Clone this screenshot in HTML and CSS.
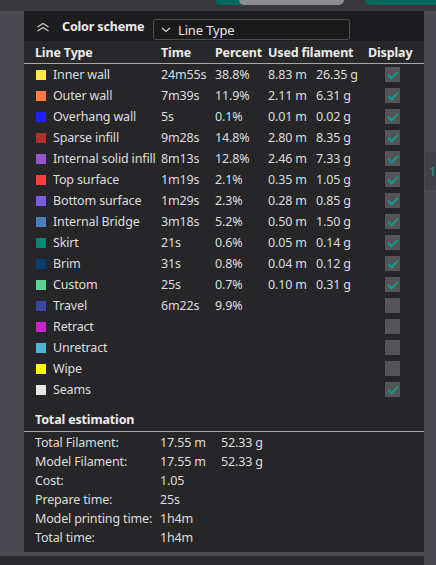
FILE: index.html
```html
<!DOCTYPE html>
<html>
<head>
<meta charset="utf-8">
<link rel="stylesheet" href="styles.css">
</head>
<body>
<div class="topbar">
  <div class="tb-green1"></div>
  <div class="tb-grey"></div>
  <div class="tb-green2"></div>
</div>
<div class="main">
  <div class="gutter-left"></div>
  <div class="panel">
    <div class="scheme">
      <svg class="chev2" width="14" height="10" viewBox="0 0 14 10"><path d="M1.5 5 L7 1.5 L12.5 5 M1.5 9 L7 5.5 L12.5 9" fill="none" stroke="#d0d0d0" stroke-width="1.1"/></svg>
      <span class="scheme-title">Color scheme</span>
      <div class="select">
        <svg class="chev" width="10" height="6" viewBox="0 0 10 6"><path d="M1 1 L5 4.5 L9 1" fill="none" stroke="#d8d8d8" stroke-width="1.2"/></svg>
        <span>Line Type</span>
      </div>
    </div>
    <div class="thead">
      <span>Line Type</span><span>Time</span><span>Percent</span><span class="span2">Used filament</span><span class="disp">Display</span>
    </div>
    <div class="rows">
      <div class="row"><span class="lt"><i class="sw" style="background:#ffe64d"></i>Inner wall</span><span>24m55s</span><span>38.8%</span><span>8.83 m</span><span>26.35 g</span><span class="cbc"><b class="cb on"></b></span></div>
      <div class="row"><span class="lt"><i class="sw" style="background:#ff7d38"></i>Outer wall</span><span>7m39s</span><span>11.9%</span><span>2.11 m</span><span>6.31 g</span><span class="cbc"><b class="cb on"></b></span></div>
      <div class="row"><span class="lt"><i class="sw" style="background:#1f1fff"></i>Overhang wall</span><span>5s</span><span>0.1%</span><span>0.01 m</span><span>0.02 g</span><span class="cbc"><b class="cb on"></b></span></div>
      <div class="row"><span class="lt"><i class="sw" style="background:#b03029"></i>Sparse infill</span><span>9m28s</span><span>14.8%</span><span>2.80 m</span><span>8.35 g</span><span class="cbc"><b class="cb on"></b></span></div>
      <div class="row"><span class="lt"><i class="sw" style="background:#9654cc"></i>Internal solid infill</span><span>8m13s</span><span>12.8%</span><span>2.46 m</span><span>7.33 g</span><span class="cbc"><b class="cb on"></b></span></div>
      <div class="row"><span class="lt"><i class="sw" style="background:#f04040"></i>Top surface</span><span>1m19s</span><span>2.1%</span><span>0.35 m</span><span>1.05 g</span><span class="cbc"><b class="cb on"></b></span></div>
      <div class="row"><span class="lt"><i class="sw" style="background:#7a5ce0"></i>Bottom surface</span><span>1m29s</span><span>2.3%</span><span>0.28 m</span><span>0.85 g</span><span class="cbc"><b class="cb on"></b></span></div>
      <div class="row"><span class="lt"><i class="sw" style="background:#4d80ba"></i>Internal Bridge</span><span>3m18s</span><span>5.2%</span><span>0.50 m</span><span>1.50 g</span><span class="cbc"><b class="cb on"></b></span></div>
      <div class="row"><span class="lt"><i class="sw" style="background:#00876e"></i>Skirt</span><span>21s</span><span>0.6%</span><span>0.05 m</span><span>0.14 g</span><span class="cbc"><b class="cb on"></b></span></div>
      <div class="row"><span class="lt"><i class="sw" style="background:#003f70"></i>Brim</span><span>31s</span><span>0.8%</span><span>0.04 m</span><span>0.12 g</span><span class="cbc"><b class="cb on"></b></span></div>
      <div class="row"><span class="lt"><i class="sw" style="background:#5ed194"></i>Custom</span><span>25s</span><span>0.7%</span><span>0.10 m</span><span>0.31 g</span><span class="cbc"><b class="cb on"></b></span></div>
      <div class="row"><span class="lt"><i class="sw" style="background:#3848a0"></i>Travel</span><span>6m22s</span><span>9.9%</span><span></span><span></span><span class="cbc"><b class="cb"></b></span></div>
      <div class="row"><span class="lt"><i class="sw" style="background:#cc22cc"></i>Retract</span><span></span><span></span><span></span><span></span><span class="cbc"><b class="cb"></b></span></div>
      <div class="row"><span class="lt"><i class="sw" style="background:#4bb6d4"></i>Unretract</span><span></span><span></span><span></span><span></span><span class="cbc"><b class="cb"></b></span></div>
      <div class="row"><span class="lt"><i class="sw" style="background:#ffff00"></i>Wipe</span><span></span><span></span><span></span><span></span><span class="cbc"><b class="cb"></b></span></div>
      <div class="row"><span class="lt"><i class="sw" style="background:#e6e6e6"></i>Seams</span><span></span><span></span><span></span><span></span><span class="cbc"><b class="cb on"></b></span></div>
    </div>
    <div class="total-title">Total estimation</div>
    <div class="totals">
      <div class="trow"><span>Total Filament:</span><span>17.55 m</span><span>52.33 g</span></div>
      <div class="trow"><span>Model Filament:</span><span>17.55 m</span><span>52.33 g</span></div>
      <div class="trow"><span>Cost:</span><span>1.05</span><span></span></div>
      <div class="trow"><span>Prepare time:</span><span>25s</span><span></span></div>
      <div class="trow"><span>Model printing time:</span><span>1h4m</span><span></span></div>
      <div class="trow"><span>Total time:</span><span>1h4m</span><span></span></div>
    </div>
  </div>
  <div class="gutter-right">
    <div class="side-tab">1</div>
  </div>
</div>
<div class="bottombar"></div>
</body>
</html>
```

FILE: styles.css
```css
* { box-sizing: border-box; }
html, body { margin: 0; padding: 0; }
body {
  width: 436px;
  height: 565px;
  overflow: hidden;
  background: #4a4950;
  font-family: "Noto Sans", "Open Sans", sans-serif;
  font-size: 12.5px;
  letter-spacing: -0.15px;
  color: #dedede;
}
.topbar {
  height: 11px;
  background: #38373c;
  display: flex;
  align-items: flex-start;
}
.tb-green1 {
  margin-left: 215px;
  width: 26px;
  height: 5px;
  background: #00675b;
  border-radius: 0 0 0 6px;
}
.tb-grey {
  width: 105px;
  height: 5px;
  background: #8c8c8e;
  border-radius: 0 0 6px 6px;
  margin-left: -2px;
}
.tb-green2 {
  margin-left: 21px;
  flex: 1;
  height: 5px;
  background: #00675b;
  border-radius: 0 0 0 6px;
}
.main {
  display: flex;
  height: 541px;
}
.gutter-left { width: 24px; flex: none; }
.panel {
  width: 400px;
  flex: none;
  background: #262628;
  display: flex;
  flex-direction: column;
}
.gutter-right {
  flex: 1;
  display: flex;
  flex-direction: column;
  padding-top: 141px;
}
.side-tab {
  margin-left: 1px;
  height: 38px;
  background: #414046;
  color: #1aa091;
  font-size: 13px;
  line-height: 38px;
  padding-left: 4px;
  overflow: hidden;
}
.scheme {
  height: 30px;
  background: #1d1d1f;
  display: flex;
  align-items: center;
  padding-left: 12px;
}
.chev2 { flex: none; margin-top: 1px; }
.scheme-title {
  font-weight: 700;
  margin-left: 12px;
  width: 83px;
  flex: none;
  white-space: nowrap;
  color: #ececec;
}
.select {
  margin-left: 8px;
  margin-top: 7px;
  width: 197px;
  height: 21px;
  border: 1px solid #505054;
  border-radius: 3px;
  background: #1a1a1b;
  display: flex;
  align-items: center;
  padding-left: 7px;
  font-size: 13px;
  color: #e4e4e4;
}
.select .chev { margin-right: 7px; margin-top: 1px; }
.thead, .row {
  display: grid;
  grid-template-columns: 126px 54px 53px 48px 52px 1fr;
  padding-left: 11px;
  align-items: center;
}
.thead {
  height: 23px;
  background: #28282a;
  font-weight: 700;
  color: #ececec;
  border-bottom: 1px solid #a8a8aa;
  white-space: nowrap;
}
.thead .span2 { grid-column: span 2; }
.row {
  height: 21px;
  white-space: nowrap;
}
.lt { display: flex; align-items: center; }
.sw {
  display: inline-block;
  width: 10px;
  height: 10px;
  margin-left: 1px;
  margin-right: 7px;
  flex: none;
}
.cbc { display: flex; align-items: center; padding-left: 17px; }
.cb {
  display: block;
  width: 15px;
  height: 15px;
  background: #555557;
  position: relative;
}
.cb.on::after {
  content: "";
  position: absolute;
  left: 5px;
  top: 2px;
  width: 4px;
  height: 8px;
  border-right: 2px solid #0f9b88;
  border-bottom: 2px solid #0f9b88;
  transform: rotate(45deg);
}
.total-title {
  margin-top: 9px;
  height: 23px;
  line-height: 22px;
  padding-left: 11px;
  font-weight: 700;
  color: #ececec;
  border-bottom: 1px solid #a8a8aa;
}
.totals { padding-top: 1px; }
.trow {
  display: grid;
  grid-template-columns: 125px 61px 1fr;
  padding-left: 11px;
  height: 19px;
  align-items: center;
  white-space: nowrap;
}
.bottombar {
  margin-top: 4px;
  height: 9px;
  width: 424px;
  background: #2a2a2d;
}
```
